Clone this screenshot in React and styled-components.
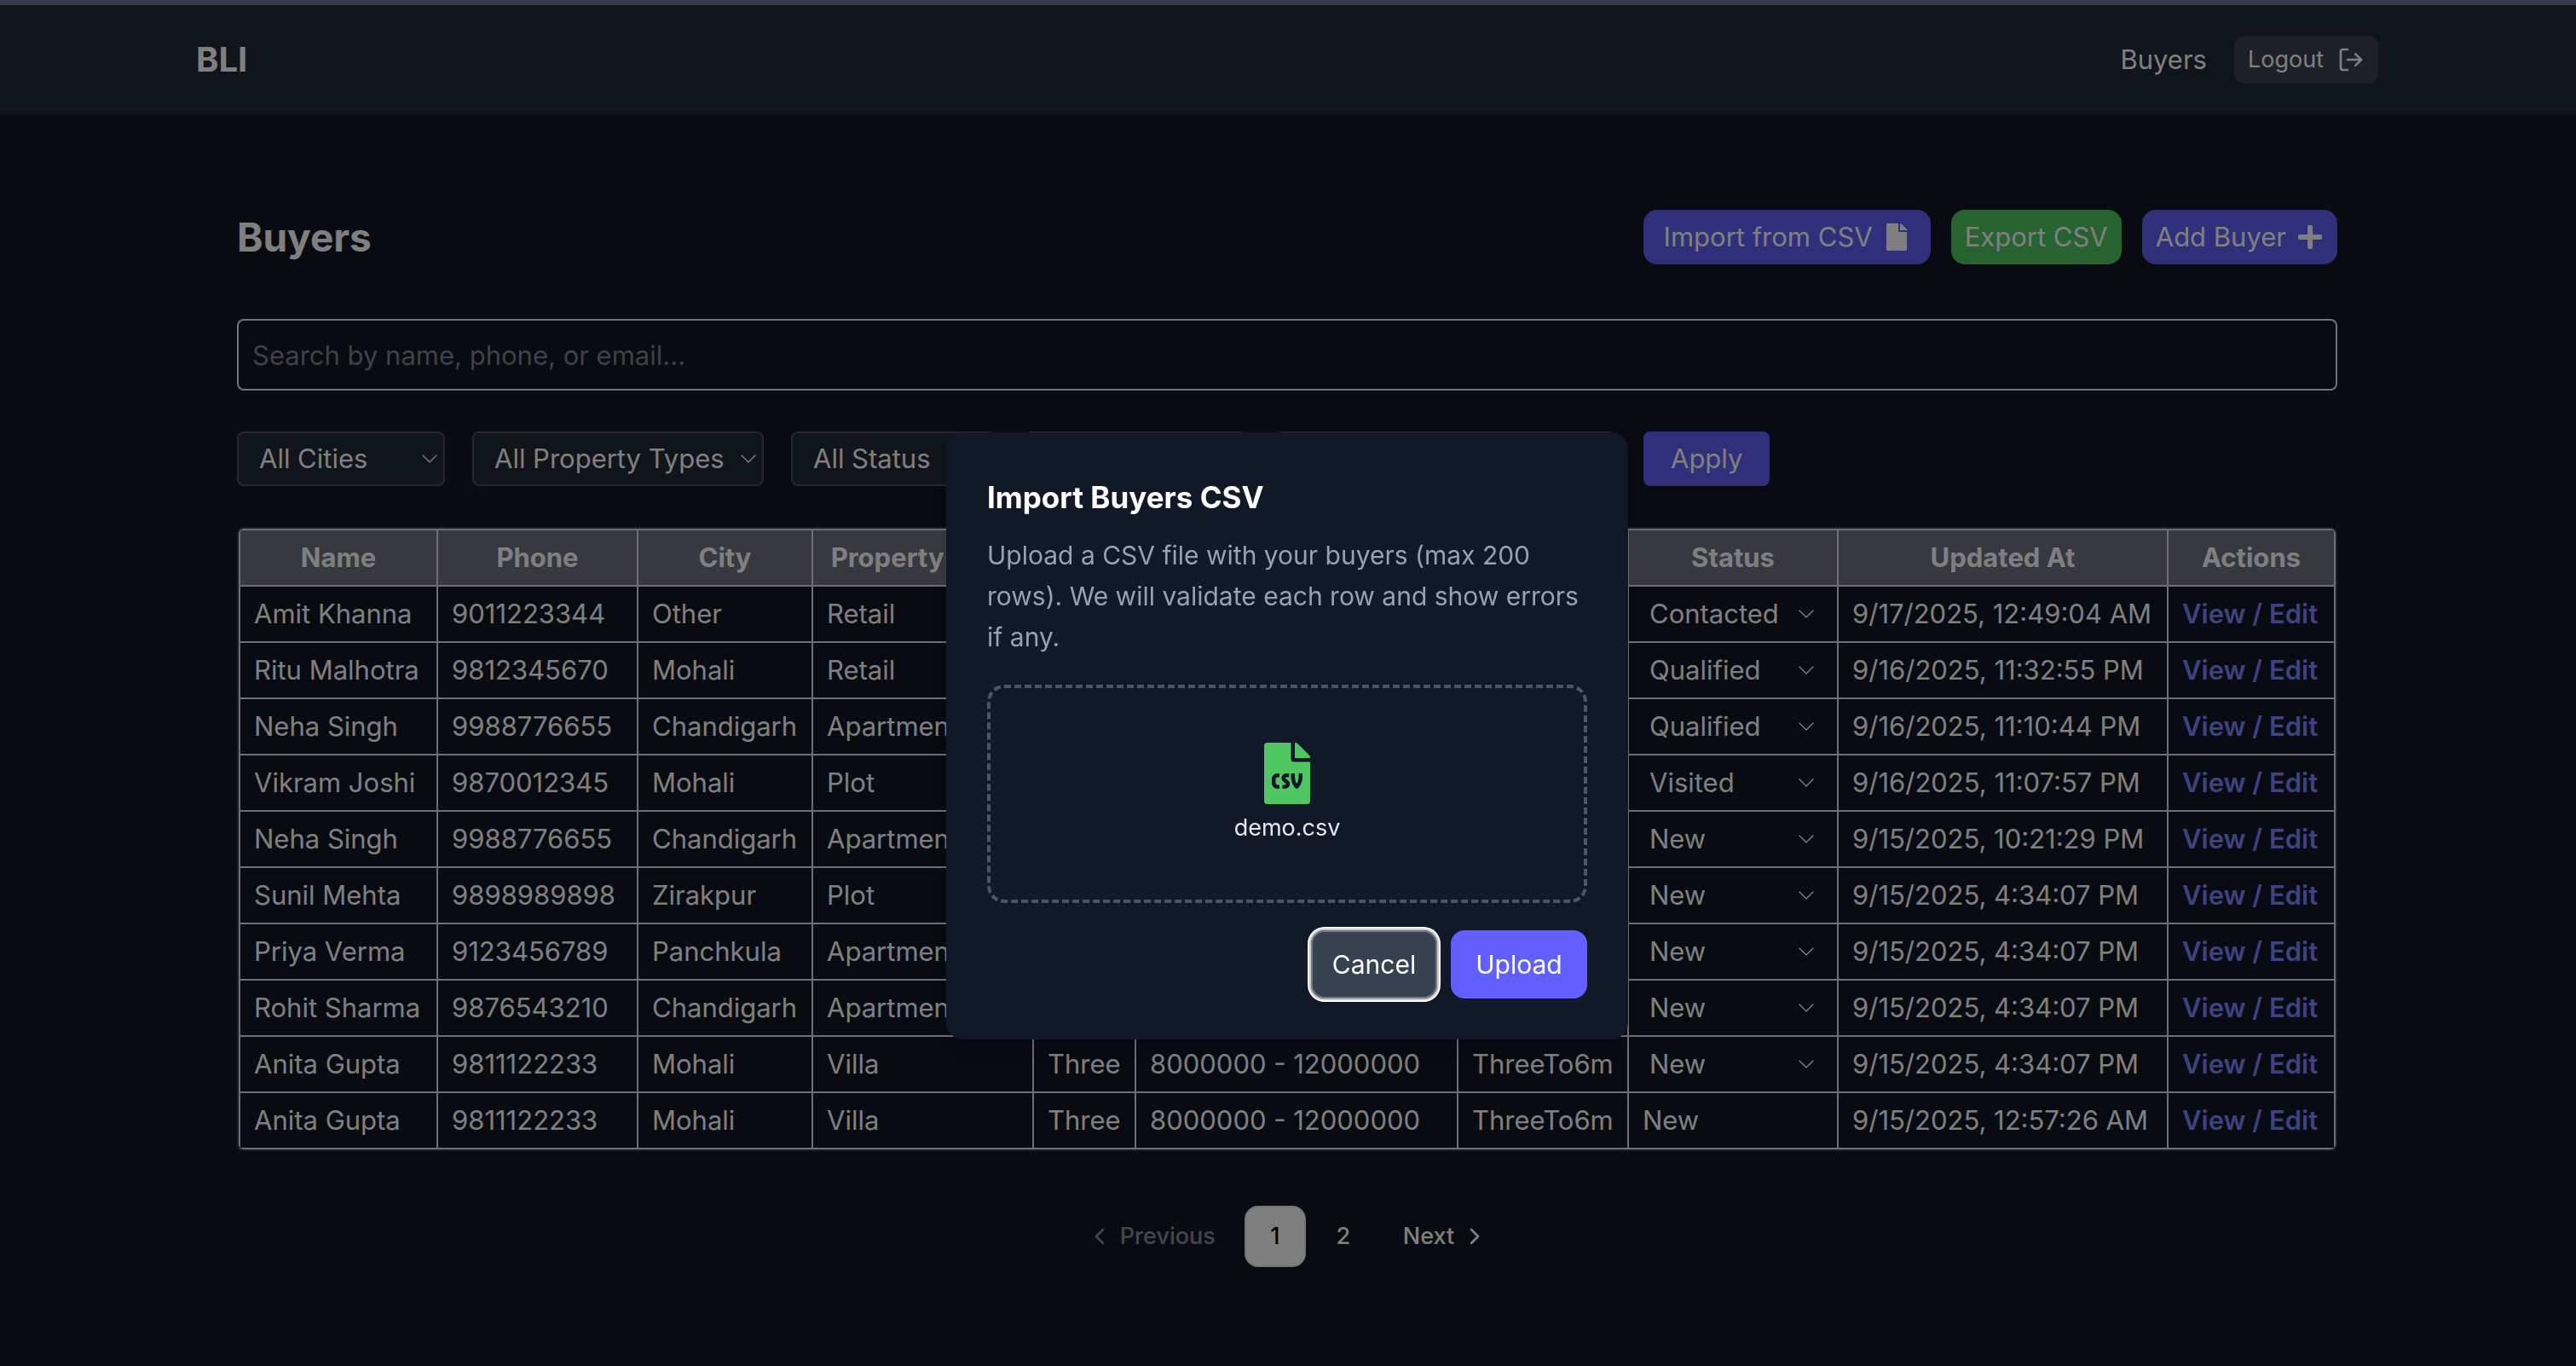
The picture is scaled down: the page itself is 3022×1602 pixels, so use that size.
import React from "react";
import styled, { createGlobalStyle } from "styled-components";
import { FaFile, FaPlus, FaFileCsv } from "react-icons/fa";
import { ChevronLeft, ChevronRight, ChevronDown, LogOut } from "lucide-react";

const Global = createGlobalStyle`
  *, *::before, *::after { box-sizing: border-box; }
  body {
    margin: 0;
    background: #101624;
    color: #fff;
    font-family: Inter, "Liberation Sans", sans-serif;
    font-size: 31px;
    line-height: 48px;
  }
  button, input, select { font: inherit; color: inherit; }
  h1, h2, p { margin: 0; }
`;

const Page = styled.div`
  min-height: 100vh;
`;

const TopStrip = styled.div`
  height: 6px;
  background: #687898;
  border-bottom: 2px solid #76787c;
`;

const Nav = styled.nav`
  display: flex;
  align-items: center;
  justify-content: space-between;
  height: 128px;
  padding: 0 232px 0 230px;
  background: #202836;
`;

const Brand = styled.a`
  color: inherit;
  text-decoration: none;
  font-size: 40px;
  font-weight: 700;
`;

const NavLinks = styled.div`
  display: flex;
  align-items: center;
  gap: 32px;
`;

const NavLink = styled.a`
  color: inherit;
  text-decoration: none;
`;

const LogoutButton = styled.button`
  display: flex;
  align-items: center;
  gap: 16px;
  height: 56px;
  padding: 0 16px;
  border: 0;
  border-radius: 12px;
  background: #3a404c;
  font-size: 27px;
`;

const Main = styled.main`
  padding: 112px 280px 0 278px;
`;

const TitleRow = styled.div`
  display: flex;
  align-items: center;
  justify-content: space-between;
  height: 64px;
`;

const Title = styled.h1`
  font-size: 46px;
  font-weight: 700;
`;

const Actions = styled.div`
  display: flex;
  gap: 24px;
`;

const ActionButton = styled.button`
  display: flex;
  align-items: center;
  gap: 12px;
  height: 64px;
  padding: 0 ${(p) => (p.$wide ? 24 : 16)}px;
  border: 0;
  border-radius: 16px;
  background: ${(p) => (p.$green ? "#4fc661" : "#615ff6")};
`;

const Search = styled.input`
  display: block;
  width: 100%;
  height: 84px;
  margin-top: 64px;
  padding: 0 16px;
  border: 2px solid #e6e6e6;
  border-radius: 8px;
  background: transparent;
  &::placeholder { color: #808289; opacity: 1; }
`;

const Filters = styled.div`
  display: flex;
  gap: 32px;
  margin-top: 48px;
`;

const SelectBox = styled.label`
  display: grid;
  grid-template-columns: 1fr auto;
  align-items: center;
  flex: none;
  width: ${(p) => p.$width}px;
  height: 64px;
  padding-right: 0;
  border: 2px solid #4a4e5c;
  border-radius: 8px;
  background: #202836;
`;

const CellSelect = styled(SelectBox)`
  width: 100%;
  padding-right: 12px;
  border: 0;
  background: none;
`;

const NativeSelect = styled.select`
  grid-area: 1 / 1 / 2 / 3;
  width: 100%;
  height: 100%;
  padding: 0 0 0 ${(p) => p.$pad}px;
  border: 0;
  outline: 0;
  appearance: none;
  background: transparent;
`;

const Arrow = styled(ChevronDown)`
  grid-area: 1 / 2;
  pointer-events: none;
`;

const Apply = styled.button`
  height: 64px;
  padding: 0 32px;
  border: 0;
  border-radius: 8px;
  background: #615ff6;
`;

const TableFrame = styled.div`
  margin-top: 48px;
  border: 2px solid #363c4e;
  border-radius: 8px;
  overflow: hidden;
`;

const Table = styled.table`
  width: 100%;
  table-layout: fixed;
  border-collapse: collapse;
  white-space: nowrap;
`;

const Th = styled.th`
  height: 66px;
  padding: 0;
  border: 2px solid #dedede;
  background: #6e7080;
  font-weight: 700;
`;

const Td = styled.td`
  height: 66px;
  padding: 0 ${(p) => (p.$tight ? 8 : 16)}px;
  border: 2px solid #dedede;
`;

const RowLink = styled.a`
  color: #7c86ff;
  font-weight: 600;
  text-decoration: none;
`;

const Pagination = styled.nav`
  display: flex;
  justify-content: center;
  gap: 8px;
  margin-top: 64px;
  padding-bottom: 116px;
`;

const PageButton = styled.button`
  display: flex;
  align-items: center;
  justify-content: center;
  gap: 8px;
  min-width: 72px;
  height: 72px;
  padding: 0 24px;
  border: 2px solid ${(p) => (p.$active ? "#e8e8e8" : "transparent")};
  border-radius: 16px;
  background: ${(p) => (p.$active ? "#fff" : "transparent")};
  color: ${(p) => (p.$active ? "#000" : "#fff")};
  font-size: 27px;
  font-weight: 500;
  opacity: ${(p) => (p.disabled ? 0.5 : 1)};
`;

const Overlay = styled.div`
  position: fixed;
  inset: 0;
  display: flex;
  align-items: center;
  justify-content: center;
  padding: 124px 2px 0 0;
  background: rgba(0, 0, 0, 0.5);
`;

const Dialog = styled.section`
  display: flex;
  flex-direction: column;
  width: 800px;
  padding: 48px;
  border-radius: 20px;
  background: #111827;
  box-shadow: 0 20px 30px -6px rgba(0, 0, 0, 0.1), 0 8px 12px -8px rgba(0, 0, 0, 0.1);
`;

const DialogTitle = styled.h2`
  font-size: 35px;
  line-height: 56px;
  font-weight: 700;
`;

const DialogText = styled.p`
  margin-top: 16px;
  color: #99a1af;
  font-size: 30px;
`;

const DropZone = styled.div`
  display: flex;
  flex-direction: column;
  align-items: center;
  gap: 8px;
  margin-top: 32px;
  padding: 64px 0;
  border: 4px dashed #4a5565;
  border-radius: 20px;
  color: #e5e7eb;
  font-size: 27px;
  line-height: 40px;
`;

const DialogActions = styled.div`
  display: flex;
  justify-content: flex-end;
  gap: 16px;
  margin-top: 32px;
`;

const DialogButton = styled.button`
  height: 80px;
  min-width: ${(p) => (p.$primary ? 160 : 148)}px;
  padding: 0 24px;
  border: 0;
  border-radius: 16px;
  background: ${(p) => (p.$primary ? "#615fff" : "#374151")};
  font-size: 30px;
  box-shadow: ${(p) =>
    p.$focused ? "inset 0 0 0 2px #737882, 0 0 0 2px #c9c9c9, 0 0 0 4px #fff" : "none"};
`;

const filters = [
  { label: "City", value: "All Cities", width: 244 },
  { label: "Property type", value: "All Property Types", width: 342 },
  { label: "Status", value: "All Status", width: 242 },
  { label: "Timeline", value: "All Timelines", width: 260 },
  { label: "Sort", value: "Updated (Newest)", width: 402 },
];

const columns = [
  ["Name", 232],
  ["Phone", 235],
  ["City", 205],
  ["Property Type", 259],
  ["BHK", 120],
  ["Budget", 378],
  ["Timeline", 200],
  ["Status", 246],
  ["Updated At", 387],
  ["Actions", 196],
];

const rows = [
  ["Amit Khanna", "9011223344", "Other", "Retail", "", "", "", "Contacted", "9/17/2025, 12:49:04 AM"],
  ["Ritu Malhotra", "9812345670", "Mohali", "Retail", "", "", "", "Qualified", "9/16/2025, 11:32:55 PM"],
  ["Neha Singh", "9988776655", "Chandigarh", "Apartment", "", "", "", "Qualified", "9/16/2025, 11:10:44 PM"],
  ["Vikram Joshi", "9870012345", "Mohali", "Plot", "", "", "", "Visited", "9/16/2025, 11:07:57 PM"],
  ["Neha Singh", "9988776655", "Chandigarh", "Apartment", "", "", "", "New", "9/15/2025, 10:21:29 PM"],
  ["Sunil Mehta", "9898989898", "Zirakpur", "Plot", "", "", "", "New", "9/15/2025, 4:34:07 PM"],
  ["Priya Verma", "9123456789", "Panchkula", "Apartment", "", "", "", "New", "9/15/2025, 4:34:07 PM"],
  ["Rohit Sharma", "9876543210", "Chandigarh", "Apartment", "", "", "", "New", "9/15/2025, 4:34:07 PM"],
  ["Anita Gupta", "9811122233", "Mohali", "Villa", "Three", "8000000 - 12000000", "ThreeTo6m", "New", "9/15/2025, 4:34:07 PM"],
  ["Anita Gupta", "9811122233", "Mohali", "Villa", "Three", "8000000 - 12000000", "ThreeTo6m", "New", "9/15/2025, 12:57:26 AM"],
];

const STATUS = 7;

function BuyerRow({ row, editable }) {
  return (
    <tr>
      {row.map((value, i) =>
        i === STATUS && editable ? (
          <Td key={i} $tight>
            <CellSelect>
              <NativeSelect $pad={16} aria-label={`Status of ${row[0]}`}>
                <option>{value}</option>
              </NativeSelect>
              <Arrow size={32} strokeWidth={1} />
            </CellSelect>
          </Td>
        ) : (
          <Td key={i}>{value}</Td>
        )
      )}
      <Td>
        <RowLink href="#edit">View / Edit</RowLink>
      </Td>
    </tr>
  );
}

export default function App() {
  return (
    <Page>
      <Global />
      <TopStrip />
      <Nav>
        <Brand href="#home">BLI</Brand>
        <NavLinks>
          <NavLink href="#buyers">Buyers</NavLink>
          <LogoutButton>
            Logout
            <LogOut size={32} strokeWidth={2} />
          </LogoutButton>
        </NavLinks>
      </Nav>
      <Main>
        <TitleRow>
          <Title>Buyers</Title>
          <Actions>
            <ActionButton $wide>
              Import from CSV
              <FaFile size={32} />
            </ActionButton>
            <ActionButton $green>Export CSV</ActionButton>
            <ActionButton>
              Add Buyer
              <FaPlus size={32} />
            </ActionButton>
          </Actions>
        </TitleRow>
        <Search aria-label="Search buyers" placeholder="Search by name, phone, or email..." />
        <Filters>
          {filters.map((f) => (
            <SelectBox key={f.label} $width={f.width}>
              <NativeSelect $pad={24} aria-label={f.label}>
                <option>{f.value}</option>
              </NativeSelect>
              <Arrow size={32} strokeWidth={1} />
            </SelectBox>
          ))}
          <Apply>Apply</Apply>
        </Filters>
        <TableFrame>
          <Table>
            <colgroup>
              {columns.map(([name, width]) => (
                <col key={name} style={{ width }} />
              ))}
            </colgroup>
            <thead>
              <tr>
                {columns.map(([name]) => (
                  <Th key={name}>{name}</Th>
                ))}
              </tr>
            </thead>
            <tbody>
              {rows.map((row, i) => (
                <BuyerRow key={i} row={row} editable={i < rows.length - 1} />
              ))}
            </tbody>
          </Table>
        </TableFrame>
        <Pagination aria-label="Pages">
          <PageButton disabled>
            <ChevronLeft size={32} />
            Previous
          </PageButton>
          <PageButton $active>1</PageButton>
          <PageButton>2</PageButton>
          <PageButton>
            Next
            <ChevronRight size={32} />
          </PageButton>
        </Pagination>
      </Main>
      <Overlay>
        <Dialog role="dialog" aria-modal="true" aria-labelledby="import-title">
          <DialogTitle id="import-title">Import Buyers CSV</DialogTitle>
          <DialogText>
            Upload a CSV file with your buyers (max 200 rows). We will validate each row and show
            errors if any.
          </DialogText>
          <DropZone>
            <FaFileCsv size={72} color="#4fc661" />
            demo.csv
          </DropZone>
          <DialogActions>
            <DialogButton $focused>Cancel</DialogButton>
            <DialogButton $primary>Upload</DialogButton>
          </DialogActions>
        </Dialog>
      </Overlay>
    </Page>
  );
}
